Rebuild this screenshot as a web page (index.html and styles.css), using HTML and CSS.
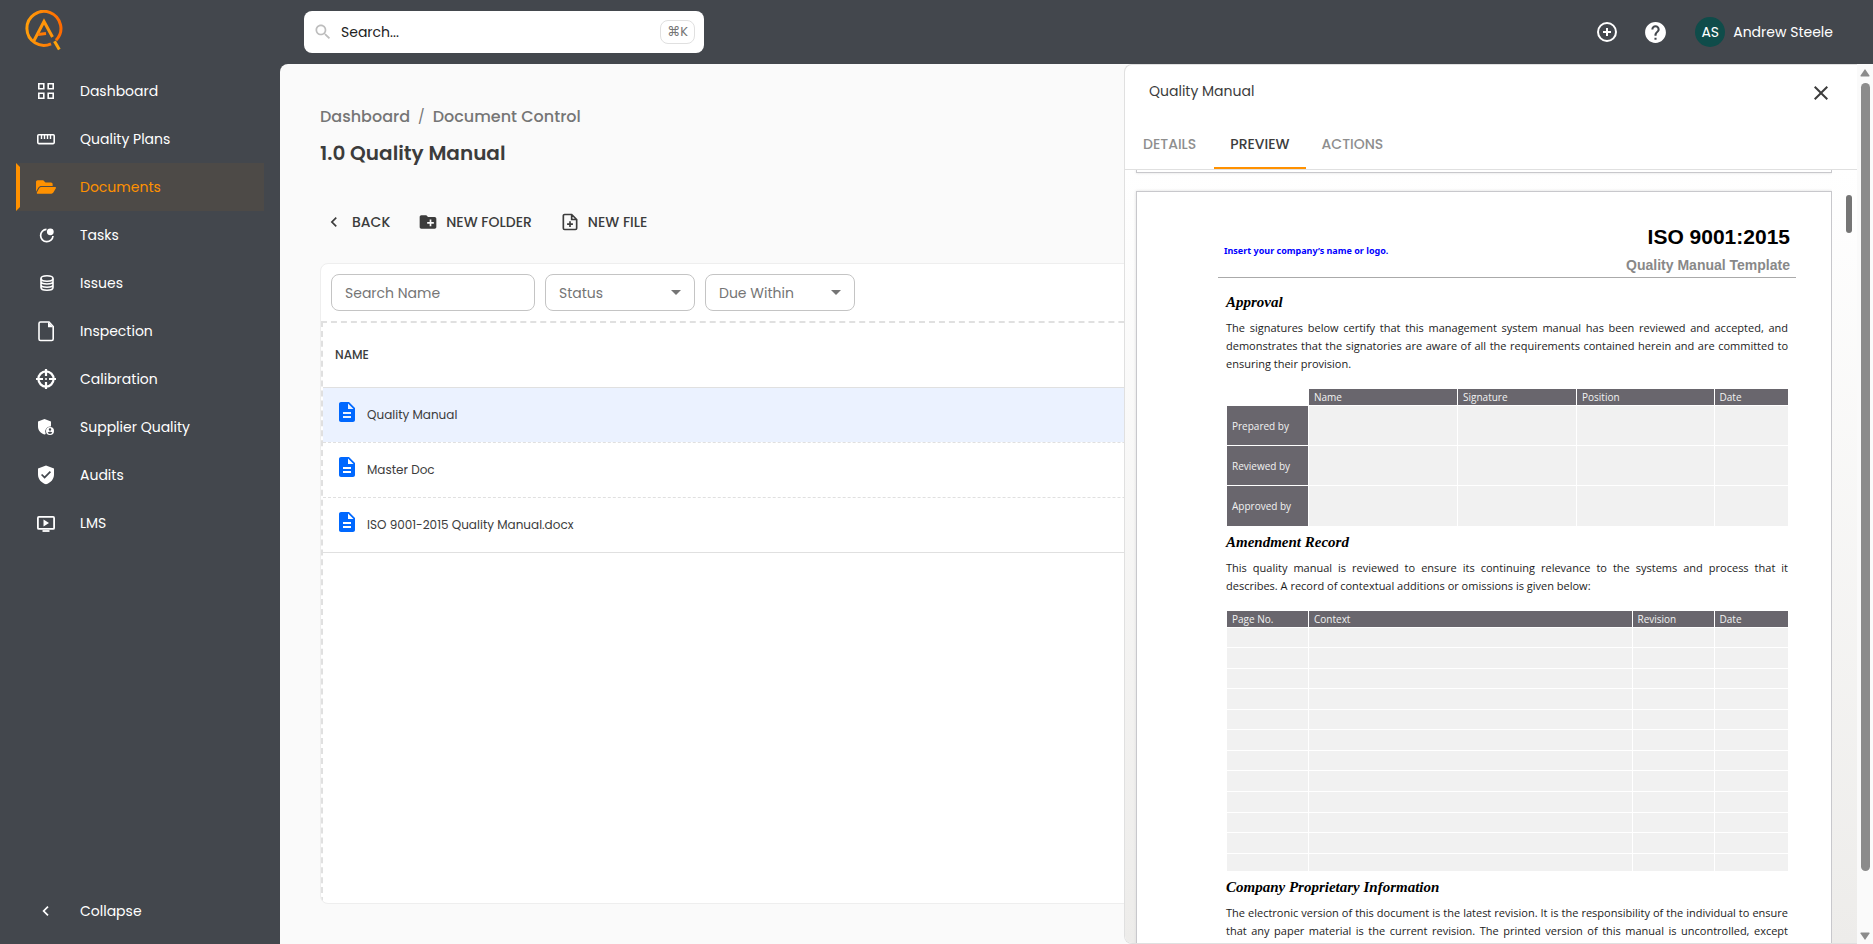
FILE: index.html
```html
<!DOCTYPE html>
<html lang="en">
  <head>
    <meta charset="utf-8">
    <title>1.0 Quality Manual</title>
    <link rel="stylesheet" href="styles.css">
  </head>
  <body>
    <header class="topbar">
      <a class="logo" href="#" aria-label="Home">
        <svg width="40" height="44" viewBox="0 0 40 44" fill="none" stroke-width="3">
          <defs>
            <linearGradient id="ring" x1="0" x2="1"><stop offset="0" stop-color="#ff9d0a"/><stop offset="1" stop-color="#ff6a00"/></linearGradient>
          </defs>
          <path d="M26 33.800A17 17 0 1 1 31 30.300" stroke="url(#ring)"/>
          <path d="M8.800 31L19 11.500l8.500 15.500" stroke="#ff950a"/>
          <path d="M13 24.500L21 23.500" stroke="#ff7a05"/>
          <path d="M29.500 31.200l4.800 8.300" stroke="#ffa30a"/>
        </svg>
      </a>
      <label class="search">
        <svg width="20" height="20" viewBox="0 0 24 24" fill="#bdbdbd"><path d="M15.500 14h-.79l-.28-.27C15.410 12.590 16 11.110 16 9.500 16 5.910 13.090 3 9.500 3S3 5.910 3 9.500 5.910 16 9.500 16c1.610 0 3.090-.59 4.230-1.570l.27.28v.79l5 4.990L20.490 19l-4.990-5zm-6 0C7.010 14 5 11.990 5 9.500S7.010 5 9.500 5 14 7.010 14 9.500 11.990 14 9.500 14z"/></svg>
        <input type="text" placeholder="Search..." aria-label="Search">
        <kbd>⌘K</kbd>
      </label>
      <div class="account">
        <button class="icon_btn" aria-label="Create">
          <svg width="24" height="24" viewBox="0 0 24 24" fill="none" stroke="#fff" stroke-width="2"><circle cx="12" cy="12" r="9"/><path d="M12 8v8M8 12h8"/></svg>
        </button>
        <button class="icon_btn" aria-label="Help">
          <svg width="25" height="25" viewBox="0 0 24 24" fill="#fff"><path d="M12 2C6.480 2 2 6.480 2 12s4.480 10 10 10 10-4.480 10-10S17.520 2 12 2zm1 17h-2v-2h2v2zm2.070-7.750l-.9.920C13.450 12.900 13 13.500 13 15h-2v-.5c0-1.100.45-2.100 1.170-2.830l1.240-1.260c.37-.36.59-.86.59-1.410 0-1.100-.9-2-2-2s-2 .9-2 2H8c0-2.210 1.790-4 4-4s4 1.790 4 4c0 .88-.36 1.680-.93 2.250z"/></svg>
        </button>
        <button class="user"><span class="avatar">AS</span>Andrew Steele</button>
      </div>
    </header>

    <div class="shell">
      <nav class="sidebar">
        <a href="#"><svg viewBox="0 0 24 24" fill="none" stroke="currentColor" stroke-width="1.600"><path d="M4.800 4.800h5v5h-5zM14.200 4.800h5v5h-5zM4.800 14.200h5v5h-5zM14.200 14.200h5v5h-5z"/></svg>Dashboard</a>
        <a href="#"><svg viewBox="0 0 24 24" fill="none" stroke="currentColor" stroke-width="1.600"><rect x="3.800" y="7.800" width="16.400" height="8.800" rx="1"/><path d="M7.500 8v4M10.500 8v4M13.500 8v4M16.500 8v4" stroke-width="1.400"/></svg>Quality Plans</a>
        <a href="#" class="active"><svg viewBox="-58 -90 692 692" fill="currentColor"><path d="M572.694 292.093L500.270 416.248A63.997 63.997 0 0 1 444.989 448H45.025c-18.523 0-30.064-20.093-20.731-36.093l72.424-124.155A64 64 0 0 1 152 256h399.964c18.523 0 30.064 20.093 20.730 36.093zM152 224h328v-48c0-26.510-21.490-48-48-48H272l-64-64H48C21.490 64 0 85.490 0 112v278.046l69.077-118.418C86.214 242.250 117.989 224 152 224z"/></svg>Documents</a>
        <a href="#"><svg viewBox="0 0 24 24" fill="none" stroke="currentColor" stroke-width="1.700"><path d="M12.500 6.300A6.200 6.200 0 1 0 19 13"/><circle cx="16.300" cy="8.800" r="3.400" fill="currentColor" stroke="none"/></svg>Tasks</a>
        <a href="#"><svg viewBox="0 0 24 24" fill="none" stroke="currentColor" stroke-width="1.600"><ellipse cx="13" cy="7.500" rx="6" ry="2.700"/><path d="M7 7.500v9c0 1.600 2.700 2.700 6 2.700s6-1.100 6-2.700v-9M7 10.500c0 1.600 2.700 2.500 6 2.500s6-.9 6-2.500M7 13.700c0 1.600 2.700 2.500 6 2.500s6-.9 6-2.500"/></svg>Issues</a>
        <a href="#"><svg viewBox="0 0 24 24" fill="none" stroke="currentColor" stroke-width="1.600"><path d="M6.500 3H15l4.200 4.500V20a1.500 1.500 0 0 1-1.500 1.500H6.500A1.500 1.500 0 0 1 5 20V4.500A1.500 1.500 0 0 1 6.500 3z"/><path d="M14 3v5.200h5z" fill="currentColor" stroke="none"/></svg>Inspection</a>
        <a href="#"><svg viewBox="0 0 24 24" fill="none" stroke="currentColor" stroke-width="2.200"><circle cx="12" cy="12" r="7.600"/><path d="M12 2v7M12 15v7M2 12h7M15 12h7"/><circle cx="12" cy="12" r="1" fill="currentColor" stroke="none"/></svg>Calibration</a>
        <a href="#"><svg viewBox="0 0 24 24" fill="currentColor"><path d="M10.500 4L4 6.500v5c0 4 2.700 6.900 6.500 8 .6-.1.900-.2 1.200-.4a5.200 5.200 0 0 1 5.300-7.600V6.500z"/><path fill-rule="evenodd" d="M16 12a4 4 0 1 0 0 8 4 4 0 0 0 0-8zm0 1.300a1.200 1.200 0 1 1 0 2.500 1.200 1.200 0 0 1 0-2.500zm-2.300 4.500c.4-.8 1.400-1.100 2.300-1.100s1.900.3 2.300 1.100c-.6.700-1.400 1.100-2.300 1.100s-1.800-.4-2.300-1.100z"/></svg>Supplier Quality</a>
        <a href="#"><svg viewBox="0 0 24 24" fill="currentColor"><path fill-rule="evenodd" d="M12 2.500L4 5.500v6c0 4.700 3.400 8.500 8 9.700 4.600-1.200 8-5 8-9.700v-6zm-1.400 13.200L7 12.100l1.200-1.200 2.400 2.400 5.200-5.200L17 9.300z"/></svg>Audits</a>
        <a href="#"><svg viewBox="0 0 24 24" fill="none" stroke="currentColor" stroke-width="1.800"><rect x="3.900" y="5.900" width="16.200" height="12" rx="1"/><path d="M9.500 8.500v7l5.500-3.500z" fill="currentColor" stroke="none"/><path d="M8.500 20h7"/></svg>LMS</a>
        <button class="collapse"><svg viewBox="0 0 24 24" fill="currentColor"><path d="M14.600 8.200L13.400 7l-5 5 5 5 1.200-1.200L10.800 12z"/></svg>Collapse</button>
      </nav>

      <main>
        <nav class="crumbs" aria-label="Breadcrumb">
          <a href="#">Dashboard</a><span>/</span><a href="#">Document Control</a>
        </nav>
        <h1>1.0 Quality Manual</h1>

        <div class="toolbar">
          <button><svg width="20" height="20" viewBox="0 0 24 24" fill="#3c3c3c"><path d="M15.410 7.410L14 6l-6 6 6 6 1.410-1.410L10.830 12z"/></svg>BACK</button>
          <button><svg width="20" height="20" viewBox="0 0 24 24" fill="#3c3c3c"><path d="M20 6h-8l-2-2H4c-1.110 0-1.990.89-1.990 2L2 18c0 1.110.89 2 2 2h16c1.110 0 2-.89 2-2V8c0-1.110-.89-2-2-2zm-1 8h-3v3h-2v-3h-3v-2h3V9h2v3h3v2z"/></svg>NEW FOLDER</button>
          <button><svg width="20" height="20" viewBox="0 0 24 24" fill="none" stroke="#3c3c3c" stroke-width="2"><path d="M14 3H5.500A1.500 1.500 0 0 0 4 4.500v15A1.500 1.500 0 0 0 5.500 21h13a1.500 1.500 0 0 0 1.500-1.500V9zM14 3v6h6M12 11v7M8.500 14.500h7"/></svg>NEW FILE</button>
        </div>

        <section class="card">
          <div class="filters">
            <input class="field name_field" type="text" placeholder="Search Name" aria-label="Search Name">
            <div class="pick">
              <select class="field" aria-label="Status"><option>Status</option></select>
            </div>
            <div class="pick">
              <select class="field" aria-label="Due Within"><option>Due Within</option></select>
            </div>
          </div>
          <div class="dropzone">
            <table class="files">
              <thead>
                <tr><th>NAME</th></tr>
              </thead>
              <tbody>
                <tr class="selected"><td><div class="file"><svg width="24" height="24" viewBox="0 0 24 24" fill="#0068ff"><path d="M14 2H6c-1.100 0-1.990.9-1.990 2L4 20c0 1.100.89 2 1.990 2H18c1.100 0 2-.9 2-2V8l-6-6zm2 16H8v-2h8v2zm0-4H8v-2h8v2zm-3-5V3.500L18.500 9H13z"/></svg><span>Quality Manual</span></div></td></tr>
                <tr><td><div class="file"><svg width="24" height="24" viewBox="0 0 24 24" fill="#0068ff"><path d="M14 2H6c-1.100 0-1.990.9-1.990 2L4 20c0 1.100.89 2 1.990 2H18c1.100 0 2-.9 2-2V8l-6-6zm2 16H8v-2h8v2zm0-4H8v-2h8v2zm-3-5V3.500L18.500 9H13z"/></svg><span>Master Doc</span></div></td></tr>
                <tr><td><div class="file"><svg width="24" height="24" viewBox="0 0 24 24" fill="#0068ff"><path d="M14 2H6c-1.100 0-1.990.9-1.990 2L4 20c0 1.100.89 2 1.990 2H18c1.100 0 2-.9 2-2V8l-6-6zm2 16H8v-2h8v2zm0-4H8v-2h8v2zm-3-5V3.500L18.500 9H13z"/></svg><span>ISO 9001-2015 Quality Manual.docx</span></div></td></tr>
              </tbody>
            </table>
          </div>
        </section>
      </main>

      <!-- preview drawer, slides over the file list -->
      <aside class="drawer">
        <div class="drawer_head">
          <h2>Quality Manual</h2>
          <button class="icon_btn" aria-label="Close">
            <svg width="24" height="24" viewBox="0 0 24 24" fill="#3c3c3c"><path d="M19 6.410L17.590 5 12 10.590 6.410 5 5 6.410 10.590 12 5 17.590 6.410 19 12 13.410 17.590 19 19 17.590 13.410 12z"/></svg>
          </button>
        </div>
        <div class="tabs" role="tablist">
          <button role="tab">DETAILS</button>
          <button role="tab" class="current" aria-selected="true">PREVIEW</button>
          <button role="tab">ACTIONS</button>
        </div>
        <div class="viewer">
          <div class="pages">
            <div class="page page_prev"></div>
            <article class="page">
              <header class="doc_head">
                <b class="doc_logo">Insert your company’s name or logo.</b>
                <div class="doc_title">
                  <h3>ISO 9001:2015</h3>
                  <p>Quality Manual Template</p>
                </div>
              </header>
              <h4>Approval</h4>
              <p>The signatures below certify that this management system manual has been reviewed and accepted, and demonstrates that the signatories are aware of all the requirements contained herein and are committed to ensuring their provision.</p>
              <table class="grid approval">
                <colgroup><col class="c_label"><col class="c_name"><col class="c_sign"><col><col class="c_date"></colgroup>
                <tr><td class="blank"></td><th>Name</th><th>Signature</th><th>Position</th><th>Date</th></tr>
                <tr><th>Prepared by</th><td></td><td></td><td></td><td></td></tr>
                <tr><th>Reviewed by</th><td></td><td></td><td></td><td></td></tr>
                <tr><th>Approved by</th><td></td><td></td><td></td><td></td></tr>
              </table>
              <h4>Amendment Record</h4>
              <p>This quality manual is reviewed to ensure its continuing relevance to the systems and process that it describes. A record of contextual additions or omissions is given below:</p>
              <table class="grid amendments">
                <colgroup><col class="c_label"><col><col class="c_label"><col class="c_date"></colgroup>
                <tr><th>Page No.</th><th>Context</th><th>Revision</th><th>Date</th></tr>
                <tr><td></td><td></td><td></td><td></td></tr>
                <tr><td></td><td></td><td></td><td></td></tr>
                <tr><td></td><td></td><td></td><td></td></tr>
                <tr><td></td><td></td><td></td><td></td></tr>
                <tr><td></td><td></td><td></td><td></td></tr>
                <tr><td></td><td></td><td></td><td></td></tr>
                <tr><td></td><td></td><td></td><td></td></tr>
                <tr><td></td><td></td><td></td><td></td></tr>
                <tr><td></td><td></td><td></td><td></td></tr>
                <tr><td></td><td></td><td></td><td></td></tr>
                <tr><td></td><td></td><td></td><td></td></tr>
                <tr><td></td><td></td><td></td><td></td></tr>
              </table>
              <h4>Company Proprietary Information</h4>
              <p class="runs_on">The electronic version of this document is the latest revision. It is the responsibility of the individual to ensure that any paper material is the current revision. The printed version of this manual is uncontrolled, except</p>
            </article>
          </div>
          <div class="viewer_track"><div class="viewer_thumb"></div></div>
        </div>
      </aside>

      <div class="scrollbar" aria-hidden="true">
        <svg width="10" height="8" viewBox="0 0 10 8" fill="#8b8b8b"><path d="M5 0l4.500 6.500q.3 1-.7 1H1.200q-1 0-.7-1z"/></svg>
        <div class="thumb"></div>
        <svg width="10" height="8" viewBox="0 0 10 8" fill="#8b8b8b"><path d="M5 8l4.500-6.500q.3-1-.7-1H1.200q-1 0-.7 1z"/></svg>
      </div>
    </div>
  </body>
</html>
```
FILE: styles.css
```css
* {
  box-sizing: border-box;
}
body {
  display: flex;
  flex-direction: column;
  margin: 0;
  height: 100vh;
  overflow: hidden;
  background-color: #43474d;
  color: #3c3c3c;
  font-family: Poppins, Inter, sans-serif;
  font-size: 14px;
}
a {
  color: inherit;
  text-decoration: none;
}
button, input, select {
  margin: 0;
  border: 0;
  padding: 0;
  background: none;
  color: inherit;
  font: inherit;
}
svg {
  flex: none;
}
h1, h2, h3, h4, p {
  margin: 0;
}

/* top bar */
.topbar {
  display: flex;
  align-items: center;
  flex: none;
  height: 64px;
  padding-right: 40px;
  color: #fff;
}
.logo {
  display: flex;
  width: 304px;
  padding-left: 25px;
}
.search {
  display: flex;
  align-items: center;
  gap: 8px;
  width: 400px;
  height: 42px;
  padding: 0 9px;
  border-radius: 8px;
  background-color: #fff;
}
.search input {
  flex: 1;
  min-width: 0;
}
.search input::placeholder {
  color: #212121;
  opacity: 1;
}
kbd {
  padding: 2px 6px;
  border: 1px solid #e0e0e0;
  border-radius: 8px;
  color: #757575;
  font: 13px/18px Poppins, Inter, "DejaVu Sans", sans-serif;
}
.account {
  display: flex;
  align-items: center;
  gap: 24px;
  margin-left: auto;
}
.icon_btn {
  display: flex;
}
.user {
  display: flex;
  align-items: center;
  gap: 8px;
  margin-left: 3px;
}
.avatar {
  display: grid;
  place-items: center;
  width: 30px;
  height: 30px;
  border-radius: 50%;
  background-color: #0f4c4a;
}

.shell {
  position: relative;
  display: flex;
  flex: 1;
  min-height: 0;
}

/* sidebar */
.sidebar {
  display: flex;
  flex-direction: column;
  flex: none;
  width: 280px;
  padding: 3px 16px 9px;
  color: #fff;
}
.sidebar a, .collapse {
  display: flex;
  align-items: center;
  gap: 22px;
  height: 48px;
  padding-left: 18px;
}
.sidebar svg {
  width: 24px;
  height: 24px;
}
.sidebar .active {
  border: 4px solid transparent;
  border-left-color: #ff9100;
  padding-left: 14px;
  background-color: #4d4a47;
  color: #ff9100;
}
.collapse {
  margin-top: auto;
}

/* file list */
main {
  display: flex;
  flex-direction: column;
  flex: 1;
  min-width: 0;
  padding: 40px;
  border-top-left-radius: 8px;
  background-color: #fafafa;
}
.crumbs {
  display: flex;
  gap: 8px;
  color: #757575;
  font-size: 16px;
  line-height: 26px;
  font-weight: 500;
}
.crumbs span {
  font-size: 14px;
  font-weight: 400;
}
h1 {
  margin-top: 7px;
  font-size: 20px;
  line-height: 32px;
  font-weight: 600;
}
.toolbar {
  display: flex;
  gap: 28px;
  margin: 37px 0 25px;
  padding-left: 4px;
}
.toolbar button {
  display: flex;
  align-items: center;
  gap: 8px;
  height: 32px;
  font-weight: 500;
}
.card {
  display: flex;
  flex-direction: column;
  flex: 1;
  border: 1px solid #eee;
  border-radius: 8px;
  background-color: #fff;
  overflow: hidden;
}
.filters {
  display: flex;
  gap: 10px;
  padding: 10px;
}
.field {
  width: 150px;
  height: 37px;
  padding: 1px 13px 0;
  border: 1px solid #c4c4c4;
  border-radius: 8px;
  color: #757575;
}
.field::placeholder {
  color: #757575;
  opacity: 1;
}
.name_field {
  width: 204px;
}
select.field {
  appearance: none;
}
.pick {
  position: relative;
}
.pick::after {
  content: "";
  position: absolute;
  top: 16px;
  right: 14px;
  border: 5px solid transparent;
  border-top-color: #757575;
  border-bottom: 0;
  pointer-events: none;
}
.dropzone {
  flex: 1;
  border: 2px dashed #e0e0e0;
  border-bottom: 0;
}
.files {
  width: 100%;
  border-collapse: collapse;
  font-size: 12px;
}
.files th {
  height: 64px;
  padding: 0 12px;
  border-bottom: 1px solid #e0e0e0;
  font-weight: 500;
  text-align: left;
}
.files td {
  height: 55px;
  padding: 0 12px;
  border-bottom: 1px dashed #e0e0e0;
}
.files tr:last-child td {
  border-bottom-style: solid;
}
.files .selected {
  background-color: #ebf2ff;
}
.file {
  display: flex;
  gap: 8px;
  line-height: 30px;
}

/* drawer */
.drawer {
  position: absolute;
  top: 0;
  right: 16px;
  bottom: 0;
  display: flex;
  flex-direction: column;
  width: 733px;
  border: 1px solid #e0e0e0;
  border-right: 0;
  border-radius: 8px 0 0 8px;
  background-color: #fff;
  overflow: hidden;
}
.drawer_head {
  display: flex;
  justify-content: space-between;
  padding: 16px 24px 8px;
}
h2 {
  font-size: 14px;
  line-height: 20px;
  font-weight: 400;
}
.tabs {
  display: flex;
  flex: none;
  height: 57px;
  padding-left: 2px;
  border-bottom: 1px solid #e0e0e0;
}
.tabs button {
  padding: 6px 16px 0;
  color: #8e8e8e;
  font-weight: 500;
}
.tabs .current {
  margin-left: 2px;
  border-bottom: 2px solid #ff9100;
  padding-top: 8px;
  color: #3c3c3c;
}
.viewer {
  display: flex;
  flex: 1;
  min-height: 0;
  background: linear-gradient(#fff, #edecea);
}
.pages {
  flex: 1;
  padding-left: 11px;
  overflow: hidden;
}
.viewer_track {
  width: 25px;
  padding: 25px 5px 0 14px;
}
.viewer_thumb {
  height: 38px;
  border-radius: 3px;
  background-color: #757575;
}

/* document page */
.page {
  min-height: 900px;
  padding: 32px 43px 0 89px;
  border: 1px solid #c8c8cc;
  background-color: #fff;
  box-shadow: 0 0 3px #ddd;
  color: #1c1c1c;
  font: 11px/18px "Open Sans", "Noto Sans", sans-serif;
}
.page_prev {
  min-height: 0;
  height: 3px;
  margin-bottom: 18px;
  padding: 0;
  border-top: 0;
}
.doc_head {
  display: flex;
  justify-content: space-between;
  align-items: center;
  height: 54px;
  margin: 0 -8px 14px;
  padding: 0 6px;
  border-bottom: 1px solid #aaa;
}
.doc_logo {
  color: #0000ff;
  font-family: "Noto Sans", sans-serif;
  font-size: 9px;
}
.doc_title {
  padding-bottom: 4px;
  color: #888;
  font: bold 14px/24px "Liberation Sans", Arial, sans-serif;
  text-align: right;
}
.doc_title h3 {
  color: #000;
  font-size: 21px;
  line-height: 32px;
}
h4 {
  color: #000;
  font: italic bold 15px/20px "Liberation Serif", serif;
}
article > p {
  margin: 7px 0 15px;
  text-align: justify;
}
.runs_on {
  text-align-last: justify;
}
.grid {
  width: 100%;
  margin-bottom: 6px;
  table-layout: fixed;
  border-collapse: collapse;
}
.grid th {
  padding: 0 5px;
  border: 1px solid #fff;
  border-width: 1px 0 0 1px;
  background-color: #69666d;
  color: #f2f2f2;
  font-size: 10px;
  line-height: 16px;
  font-weight: 400;
  text-align: left;
}
.grid td {
  border: 1px solid #fff;
  border-width: 1px 0 0 1px;
  background-color: #f1f1f1;
}
.grid .blank {
  background: none;
}
.approval tr + tr {
  height: 40px;
}
.amendments {
  height: 261px;
}
.amendments tr:first-child {
  height: 17px;
}
.c_label {
  width: 82px;
}
.c_name {
  width: 149px;
}
.c_sign {
  width: 119px;
}
.c_date {
  width: 74px;
}

/* window scrollbar */
.scrollbar {
  position: absolute;
  top: 0;
  right: 0;
  bottom: 0;
  display: flex;
  flex-direction: column;
  align-items: center;
  gap: 6px;
  width: 16px;
  padding: 5px 0 4px;
  background-color: #fafafa;
}
.thumb {
  width: 9px;
  height: 788px;
  max-height: 92%;
  border-radius: 5px;
  background-color: #8b8b8b;
}
.scrollbar svg:last-child {
  margin-top: auto;
}
```
